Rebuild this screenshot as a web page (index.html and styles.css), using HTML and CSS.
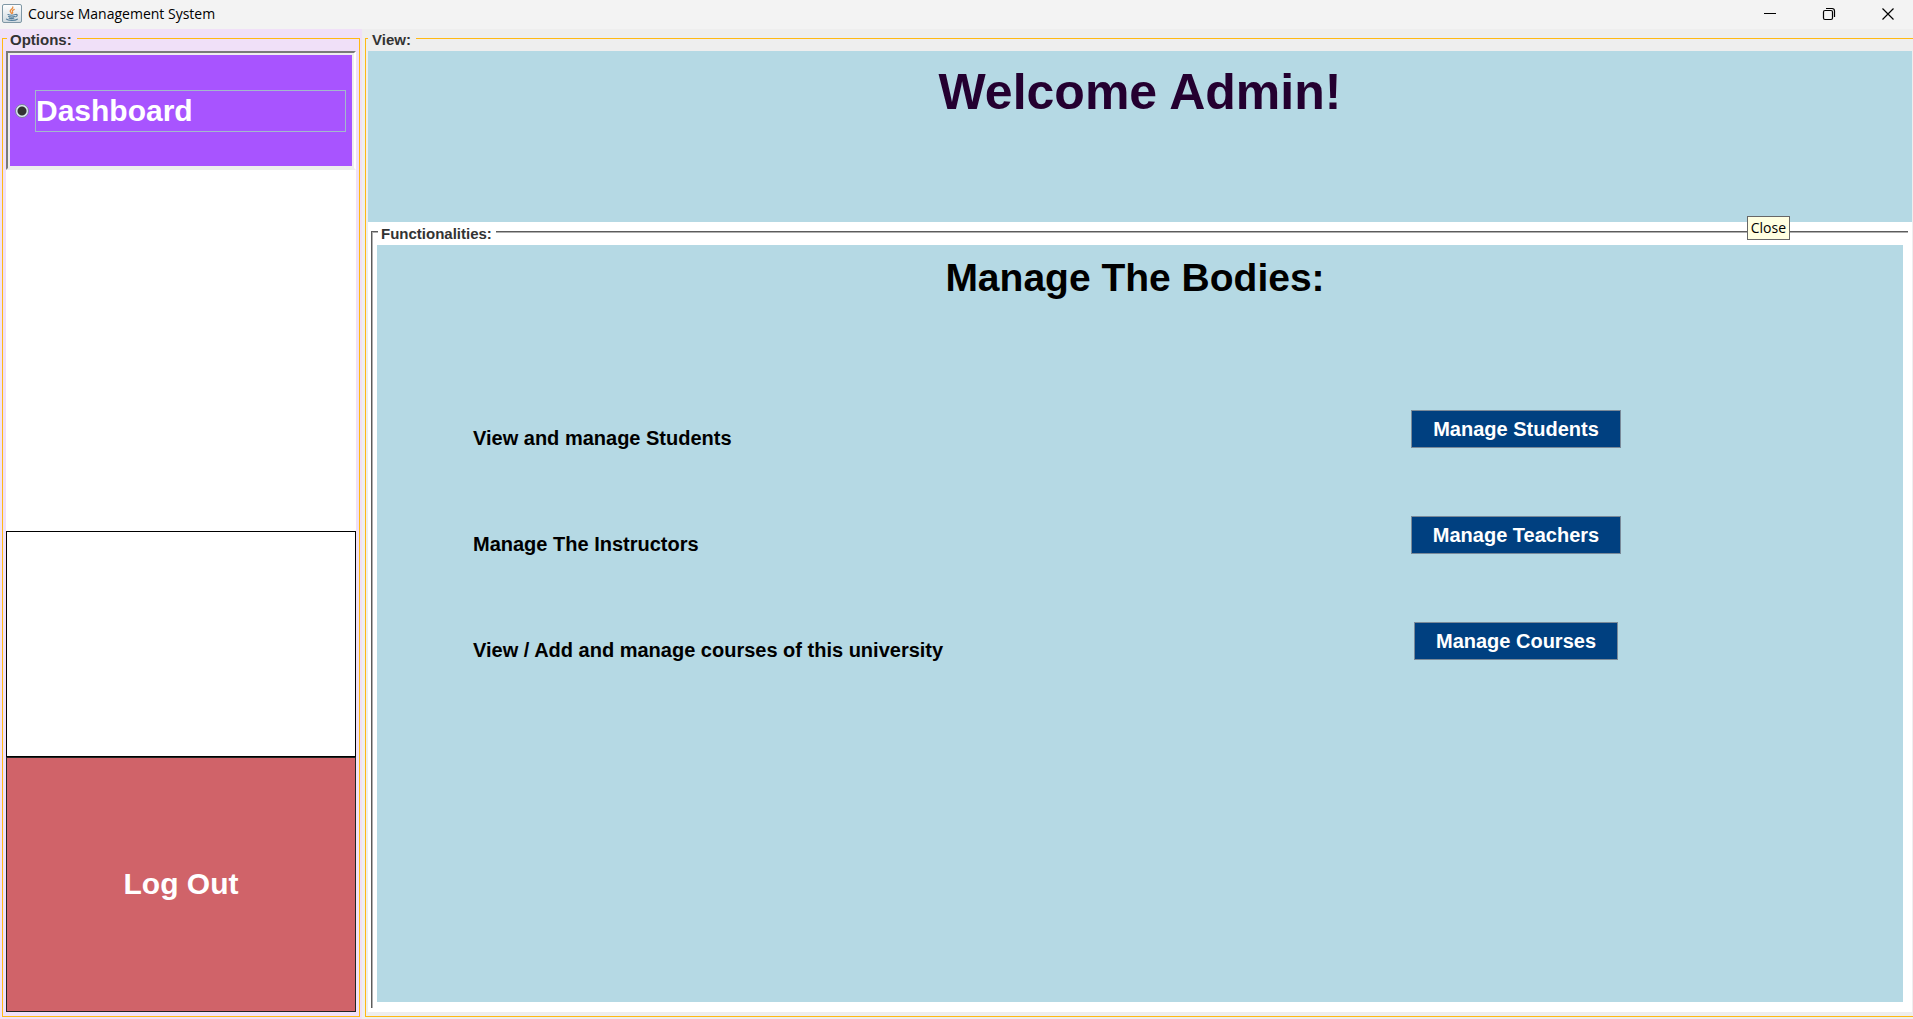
FILE: index.html
```html
<!DOCTYPE html>
<html lang="en">
<head>
<meta charset="utf-8">
<title>Course Management System</title>
<link rel="stylesheet" href="styles.css">
</head>
<body>
<div class="window">
  <header class="titlebar">
    <svg class="app-icon" width="20" height="20" viewBox="0 0 20 20" aria-hidden="true">
      <defs>
        <linearGradient id="tile" x1="0" y1="0" x2="0" y2="1">
          <stop offset="0" stop-color="#ffffff"/>
          <stop offset="1" stop-color="#cfd9df"/>
        </linearGradient>
      </defs>
      <rect x="0.5" y="0.5" width="19" height="18" rx="1.5" fill="url(#tile)" stroke="#7f97a5"/>
      <path d="M10.8 3c.8 1.6-2.8 2.6-2.6 4.2.1.9 1 1.400 1.300 2.300M12.200 5.500c-1.400.6-2.200 1.300-1.700 2.300.4.700.3 1.200-.4 1.700" fill="none" stroke="#ea8b3d" stroke-width="1.300" stroke-linecap="round"/>
      <path d="M6 10.500c1.500.7 5.500.7 7.500 0M6.600 12.500c1.800.6 4.400.6 6 0M7.200 14.200c1.300.5 3.200.5 4.600 0M13.600 10.500c2-.6 2.300 1.500.2 2.300M4.500 15.200c1.500 1.600 9 1.400 10.800 0" fill="none" stroke="#557e9d" stroke-width="1.200" stroke-linecap="round"/>
    </svg>
    <span class="app-name">Course Management System</span>
    <div class="window-controls">
      <button type="button" aria-label="Minimize"><svg width="14" height="14" viewBox="0 0 14 14"><path d="M1 6.500h12" stroke="#000"/></svg></button>
      <button type="button" aria-label="Restore"><svg width="14" height="14" viewBox="0 0 14 14" fill="none" stroke="#000" stroke-width="1.200"><rect x="1.500" y="3.500" width="9" height="9" rx="1.500"/><path d="M4 1.500h6a2.500 2.500 0 0 1 2.500 2.500v6"/></svg></button>
      <button type="button" aria-label="Close" aria-describedby="close-tip"><svg width="14" height="14" viewBox="0 0 14 14"><path d="M1.500 1.500l11 11M12.500 1.500l-11 11" stroke="#000" stroke-width="1.200"/></svg></button>
    </div>
  </header>

  <div class="content">
    <nav class="sidebar">
      <fieldset class="group options">
        <legend>Options:</legend>
        <div class="option">
          <input class="option-radio" type="radio" name="view" id="dashboard" checked>
          <label class="option-label" for="dashboard">Dashboard</label>
        </div>
        <div class="spacer"></div>
        <div class="blank-box"></div>
        <button class="logout" type="button">Log Out</button>
      </fieldset>
    </nav>

    <main class="main">
      <fieldset class="group view">
        <legend>View:</legend>
        <div class="banner"><h1>Welcome Admin!</h1></div>
        <div class="panel">
          <fieldset class="functions">
            <legend>Functionalities:</legend>
            <div class="functions-body">
              <h2>Manage The Bodies:</h2>
              <div class="actions">
                <p>View and manage Students</p>
                <div class="action"><button type="button">Manage Students</button></div>
                <p>Manage The Instructors</p>
                <div class="action"><button type="button">Manage Teachers</button></div>
                <p>View / Add and manage courses of this university</p>
                <div class="action"><button type="button">Manage Courses</button></div>
              </div>
            </div>
          </fieldset>
        </div>
      </fieldset>
    </main>
  </div>
  <div class="tooltip" role="tooltip" id="close-tip">Close</div>
</div>
</body>
</html>
```
FILE: styles.css
```css
* {
  box-sizing: border-box;
}

body {
  margin: 0;
  font-family: "Liberation Sans", Arial, sans-serif;
  font-weight: bold;
  color: #000;
}

h1, h2, p {
  margin: 0;
}

button {
  font: inherit;
  margin: 0;
}

fieldset {
  min-width: 0;
  margin: 0;
}

legend {
  font-size: 15px;
  line-height: 16px;
  color: #333;
}

.window {
  position: relative;
  display: flex;
  flex-direction: column;
  min-height: 100vh;
  background: #eee;
}

/* Title bar */
.titlebar {
  display: flex;
  align-items: center;
  height: 29px;
  padding: 0 0 1px 2px;
  background: #f3f3f3;
}

.app-name {
  margin-left: 6px;
  font: 14px/20px "Open Sans", "Segoe UI", sans-serif;
}

.window-controls {
  display: flex;
  gap: 9px;
  margin-left: auto;
}

.window-controls button {
  display: flex;
  align-items: center;
  justify-content: center;
  width: 50px;
  height: 28px;
  padding: 0;
  border: 0;
  background: none;
}

/* Two-pane body */
.content {
  flex: 1;
  display: flex;
}

.sidebar {
  flex: 0 0 362px;
  display: flex;
  padding: 0 2px 2px;
  background: #f0e0f8;
}

.main {
  flex: 1;
  display: flex;
  min-width: 0;
  padding: 0 0 2px 3px;
}

.group {
  flex: 1;
  display: flex;
  flex-direction: column;
  border: 1px solid #ffb914;
  padding: 3px 3px 4px;
}

.group > legend {
  padding: 3px 5px 0 3px;
}

.view {
  border-right: 0;
  padding: 3px 1px 4px 2px;
}

.view > legend {
  padding-left: 4px;
}

.options > legend {
  margin-left: 1px;
}

/* Sidebar */
.option {
  display: flex;
  align-items: center;
  height: 119px;
  padding: 0 8px 0 5px;
  border: 2px solid;
  border-color: #7a7a7a #fff #eee #7a7a7a;
  background: #a854ff;
  box-shadow: inset 0 0 0 2px #eee;
}

.option-radio {
  appearance: none;
  flex: none;
  width: 14px;
  height: 14px;
  margin: 0 6px 0 2px;
  border: 1px solid #7a8a99;
  border-radius: 50%;
  background: radial-gradient(circle, #333 0 4px, #dce8f0 5px);
}

.option-label {
  flex: 1;
  border: 1px solid #a3b8cc;
  font-size: 30px;
  line-height: 40px;
  color: #fff;
}

.spacer {
  flex: 362 0 0;
  background: #fff;
}

.blank-box {
  flex: 224 0 0;
  border: 1px solid #000;
  background: #fff;
}

.logout {
  flex: 252 0 0;
  border: 1px solid #222;
  background: #d06369;
  font-size: 30px;
  color: #fff;
}

/* Main pane */
.banner {
  height: 171px;
  padding-top: 13px;
  background: #b5d9e4;
  text-align: center;
}

.banner h1 {
  font-size: 50px;
  line-height: 56px;
  color: #240030;
}

.panel {
  flex: 1;
  display: flex;
  padding: 0 4px 4px 3px;
  background: #fff;
}

.functions {
  flex: 1;
  display: flex;
  flex-direction: column;
  padding: 3px 5px 6px 4px;
  border: 0 groove #b0b0b0;
  border-width: 2px 0 0 2px;
}

.functions > legend {
  margin-left: 1px;
  padding: 4px 4px 0 3px;
}

.functions-body {
  flex: 1;
  padding-top: 10px;
  background: #b5d9e4;
}

.functions-body h2 {
  padding-right: 10px;
  font-size: 39px;
  line-height: 46px;
  text-align: center;
}

.actions {
  display: grid;
  grid-template-columns: 656fr 774fr;
  grid-auto-rows: 106px;
  margin-top: 109px;
  padding-left: 96px;
  font-size: 20px;
}

.actions p {
  padding-top: 16px;
  line-height: 24px;
}

.action {
  text-align: center;
}

.action button {
  height: 38px;
  padding: 0 21px;
  border: 1px solid #7a8a99;
  background: #004080;
  color: #fff;
}

/* Hint for the close button, floating over the panes */
.tooltip {
  position: absolute;
  top: 216px;
  right: 123px;
  padding: 0 3px;
  border: 1px solid #676767;
  background: #ffffe1;
  font: 14px/22px "Open Sans", "Segoe UI", sans-serif;
}
```
